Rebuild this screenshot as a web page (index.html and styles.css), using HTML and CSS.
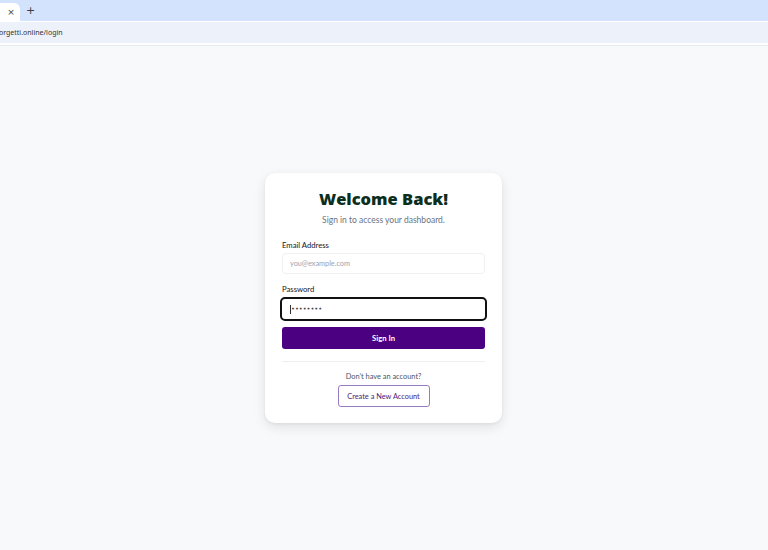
FILE: index.html
```html
<!DOCTYPE html>
<html lang="en">
<head>
<meta charset="utf-8">
<title>Login</title>
<link rel="stylesheet" href="styles.css">
</head>
<body>
<div class="chrome">
  <div class="tabbar">
    <div class="tab"><span class="tab-close">×</span></div>
    <span class="tab-new">+</span>
  </div>
  <div class="addressbar"><span class="url">orgetti.online/login</span></div>
  <div class="chrome-line"></div>
</div>
<main class="page">
  <div class="card">
    <h1 class="title">Welcome Back!</h1>
    <p class="subtitle">Sign in to access your dashboard.</p>
    <form class="form">
      <label class="label">Email Address</label>
      <div class="input placeholder">you@example.com</div>
      <label class="label label-pw">Password</label>
      <div class="input input-focus"><span class="caret"></span><span class="dots">••••••••</span></div>
      <div class="btn-primary">Sign In</div>
    </form>
    <div class="divider"></div>
    <p class="noacc">Don’t have an account?</p>
    <div class="btn-outline">Create a New Account</div>
  </div>
</main>
</body>
</html>
```
FILE: styles.css
```css
* { box-sizing: border-box; }
html, body { margin: 0; padding: 0; }
body {
  width: 768px;
  height: 550px;
  overflow: hidden;
  background: #f8f9fb;
  font-family: Lato, "Liberation Sans", sans-serif;
}
.chrome { display: flex; flex-direction: column; }
.tabbar {
  height: 21px;
  background: #d3e3fd;
  display: flex;
  align-items: flex-end;
}
.tab {
  width: 20px;
  height: 18px;
  background: #ffffff;
  border-top-right-radius: 6px;
  display: flex;
  align-items: center;
  justify-content: center;
  padding-left: 2px;
}
.tab-close { font-size: 9px; color: #3c4043; font-family: "DejaVu Sans", sans-serif; line-height: 1; }
.tab-new {
  align-self: center;
  margin-left: 6px;
  font-size: 11px;
  color: #3c4043;
  font-family: "DejaVu Sans", sans-serif;
  line-height: 1;
}
.addressbar {
  height: 22px;
  background: #edf2fa;
  border-top: 1px solid #ffffff;
  display: flex;
  align-items: center;
}
.url {
  margin-left: -1px;
  font-size: 7px;
  color: #333;
  font-family: "Noto Sans", sans-serif;
}
.chrome-line { height: 3px; background: #ffffff; border-bottom: 1px solid #e9ecef; }

.page {
  display: flex;
  justify-content: center;
  padding-top: 127px;
  padding-right: 1px;
}
.card {
  width: 237px;
  height: 250px;
  background: #ffffff;
  border-radius: 10px;
  box-shadow: 0 4px 12px rgba(0,0,0,0.10), 0 1px 3px rgba(0,0,0,0.05);
  padding: 14px 17px 0;
  display: flex;
  flex-direction: column;
  align-items: center;
}
.title {
  margin: 0;
  font-family: "Open Sans", sans-serif;
  font-weight: 800;
  font-size: 16.5px;
  color: #0c2e1d;
  line-height: 24px;
}
.subtitle {
  margin: 2px 0 0;
  font-size: 8.5px;
  color: #6b7280;
  line-height: 14px;
}
.form { width: 100%; display: flex; flex-direction: column; margin-top: 13px; }
.label {
  font-size: 7.7px;
  color: #111827;
  line-height: 10px;
  margin-bottom: 3px;
}
.label-pw { margin-top: 10px; }
.input {
  height: 21px;
  border: 1px solid #eef0f3;
  border-radius: 4px;
  font-size: 7.3px;
  display: flex;
  align-items: center;
  padding-left: 7px;
}
.placeholder { color: #9ca3af; }
.input-focus {
  height: 24px;
  margin: 0 -2px;
  border: 2px solid #111;
  border-radius: 5px;
  padding-left: 8px;
}
.caret { width: 1px; height: 9px; background: #333; }
.dots { font-size: 6.6px; color: #444; font-family: "DejaVu Sans", sans-serif; }
.btn-primary {
  margin-top: 6px;
  height: 22px;
  background: #4b0082;
  color: #ffffff;
  border-radius: 3px;
  font-size: 7.7px;
  font-weight: bold;
  display: flex;
  align-items: center;
  justify-content: center;
}
.divider { width: 100%; height: 1px; background: #eceef1; margin-top: 12px; }
.noacc {
  margin: 10px 0 0;
  font-size: 7.4px;
  color: #4b5563;
  line-height: 10px;
}
.btn-outline {
  margin-top: 3px;
  width: 92px;
  height: 22px;
  border: 1px solid #9b7bbf;
  border-radius: 3px;
  color: #4b1a7a;
  font-size: 7.4px;
  display: flex;
  align-items: center;
  justify-content: center;
}
```
